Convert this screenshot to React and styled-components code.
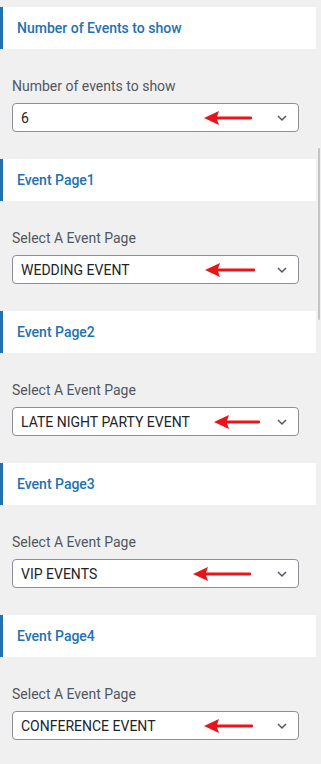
import React from 'react'
import styled, { createGlobalStyle } from 'styled-components'

const GlobalStyle = createGlobalStyle`
    body {
        margin: 0;
        background: #f0f0f1;
        font-family: Roboto, "Liberation Sans", sans-serif;
    }
`

const Panel = styled.div`
    width: 316px;
    padding-top: 7px;
    display: flex;
    flex-direction: column;
`

const SectionHeader = styled.div`
    height: 42px;
    box-sizing: border-box;
    display: flex;
    align-items: center;
    padding-left: 14px;
    background: #fff;
    border-left: 3px solid #2271b1;
    color: #2271b1;
    font-size: 14px;
    font-weight: 500;
`

const SectionBody = styled.div`
    padding: 28px 17px 27px 12px;
    display: flex;
    flex-direction: column;
`

const Label = styled.div`
    color: #50575e;
    font-size: 14px;
    line-height: 18px;
    margin-bottom: 8px;
`

const SelectBox = styled.div`
    position: relative;
    height: 29px;
    box-sizing: border-box;
    border: 1px solid #8c8f94;
    border-radius: 4px;
    background: #fff;
    display: flex;
    align-items: center;
    justify-content: space-between;
    padding: 0 10px 0 8px;
    color: #1d2327;
    font-size: 14px;
`

const Chevron = styled.svg`
    width: 12px;
    height: 12px;
    flex: none;
`

const Arrow = styled.svg`
    position: absolute;
    top: 50%;
    left: ${p => p.$left}px;
    width: ${p => p.$width}px;
    height: 14px;
    transform: translateY(-50%);
`

const Scrollbar = styled.div`
    position: fixed;
    top: 148px;
    left: 318px;
    width: 2px;
    height: 172px;
    background: #c4c4c4;
    border-radius: 1px;
`

const sections = [
    { title: 'Number of Events to show', label: 'Number of events to show', value: '6', arrow: [191, 48] },
    { title: 'Event Page1', label: 'Select A Event Page', value: 'WEDDING EVENT', arrow: [192, 50] },
    { title: 'Event Page2', label: 'Select A Event Page', value: 'LATE NIGHT PARTY EVENT', arrow: [201, 46] },
    { title: 'Event Page3', label: 'Select A Event Page', value: 'VIP EVENTS', arrow: [180, 58] },
    { title: 'Event Page4', label: 'Select A Event Page', value: 'CONFERENCE EVENT', arrow: [191, 49] },
]

function RedArrow({ left, width }) {
    return (
        <Arrow $left={left} $width={width} viewBox={`0 0 ${width} 14`}>
            <polygon points="0,7 15,0 13,5.5 13,8.5 15,14" fill="#e8141a" />
            <rect x="12" y="5.6" width={width - 12} height="2.8" rx="1" fill="#e8141a" />
        </Arrow>
    )
}

export default function App() {
    return (
        <React.Fragment>
            <GlobalStyle />
            <Panel>
                {sections.map((s) => (
                    <div key={s.title}>
                        <SectionHeader>{s.title}</SectionHeader>
                        <SectionBody>
                            <Label>{s.label}</Label>
                            <SelectBox>
                                <span>{s.value}</span>
                                <RedArrow left={s.arrow[0]} width={s.arrow[1]} />
                                <Chevron viewBox="0 0 12 12">
                                    <path d="M2 4 L6 8 L10 4" fill="none" stroke="#50575e" strokeWidth="1.5" />
                                </Chevron>
                            </SelectBox>
                        </SectionBody>
                    </div>
                ))}
            </Panel>
            <Scrollbar />
        </React.Fragment>
    )
}
